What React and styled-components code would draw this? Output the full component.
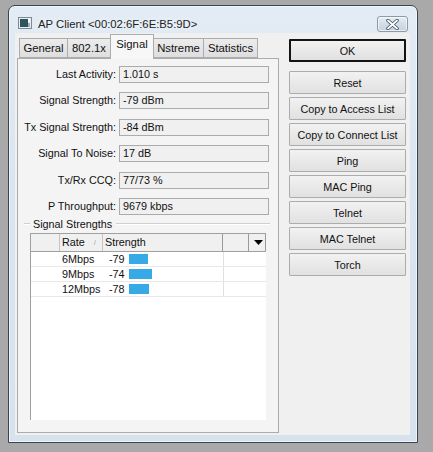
import React from 'react';
import styled, { createGlobalStyle } from 'styled-components';

const Global = createGlobalStyle`
  html, body { margin: 0; padding: 0; background: #a9a9a9; }
  body { font-family: "Liberation Sans", Arial, sans-serif; }
  * { box-sizing: border-box; }
`;

const Window = styled.div`
  margin: 5px 0 0 8px;
  width: 410px;
  height: 438px;
  border: 1px solid #3b444e;
  border-radius: 7px 7px 0 0;
  background: linear-gradient(180deg, #e3ecf5 0%, #d9e5f1 40%, #d6e2ee 100%);
  box-shadow: inset 0 0 0 1px rgba(255, 255, 255, 0.55);
  display: flex;
  flex-direction: column;
`;

const TitleBar = styled.div`
  height: 27px;
  display: flex;
  align-items: flex-start;
  padding: 10px 9px 0 9px;
`;

const TitleIcon = styled.svg`
  width: 14px;
  height: 12px;
  margin-top: 1px;
  flex: none;
`;

const TitleText = styled.div`
  margin-left: 6px;
  font-size: 11.3px;
  line-height: 16px;
  color: #222;
  text-shadow: 0 0 6px rgba(255, 255, 255, 0.9);
  white-space: nowrap;
`;

const CloseButton = styled.div`
  margin-left: auto;
  width: 31px;
  height: 16px;
  border: 1px solid #8c99a8;
  border-radius: 3px;
  background: linear-gradient(180deg, #e7eef5 0%, #d2dde8 50%, #c6d3e0 100%);
  box-shadow: inset 0 0 0 1px rgba(255, 255, 255, 0.6);
  display: flex;
  align-items: center;
  justify-content: center;
`;

const Client = styled.div`
  flex: 1;
  margin: 0 7px 7px 6px;
  background: #f0f0f0;
  display: flex;
  gap: 10px;
  padding: 0 4px 2px 2px;
`;

const LeftColumn = styled.div`
  width: 262px;
  display: flex;
  flex-direction: column;
`;

const Tabs = styled.div`
  height: 25px;
  display: flex;
  align-items: flex-end;
  padding-left: 2px;
  position: relative;
  z-index: 1;
`;

const Tab = styled.div`
  width: ${(p) => p.$w}px;
  height: ${(p) => (p.$active ? 25 : 20)}px;
  margin-bottom: ${(p) => (p.$active ? -1 : 0)}px;
  border: 1px solid #acacac;
  border-bottom: ${(p) => (p.$active ? 'none' : '1px solid #acacac')};
  margin-left: ${(p) => (p.$first ? 0 : -1)}px;
  background: ${(p) => (p.$active ? '#f7f7f7' : 'linear-gradient(180deg, #ececec, #dedede)')};
  font-size: 11.3px;
  color: #111;
  display: flex;
  align-items: ${(p) => (p.$active ? 'flex-start' : 'center')};
  padding-top: ${(p) => (p.$active ? 3 : 0)}px;
  justify-content: center;
  white-space: nowrap;
`;

const Panel = styled.div`
  flex: 1;
  border: 1px solid #acacac;
  background: #f4f4f4;
  display: flex;
  flex-direction: column;
`;

const FieldGrid = styled.div`
  display: grid;
  grid-template-columns: 98px 150px;
  grid-auto-rows: 17px;
  column-gap: 3px;
  row-gap: 9.4px;
  padding-top: 7px;
`;

const Label = styled.div`
  font-size: 10.8px;
  color: #111;
  text-align: right;
  line-height: 17px;
  white-space: nowrap;
`;

const Field = styled.div`
  border: 1px solid #ababab;
  background: #f0f0f0;
  font-size: 10.8px;
  line-height: 15px;
  padding-left: 3px;
  color: #111;
  white-space: nowrap;
`;

const GroupHeader = styled.div`
  margin: 2px 8px 0 6px;
  height: 14px;
  display: flex;
  align-items: center;
`;

const GroupLine = styled.div`
  height: 2px;
  border-top: 1px solid #d0d0d0;
  border-bottom: 1px solid #ffffff;
  width: ${(p) => (p.$w ? `${p.$w}px` : 'auto')};
  flex: ${(p) => (p.$w ? 'none' : '1')};
`;

const GroupTitle = styled.div`
  font-size: 10.8px;
  color: #111;
  padding: 0 4px 0 3px;
  white-space: nowrap;
`;

const Table = styled.div`
  margin: 2px 12px 0 12px;
  height: 187px;
  background: #ffffff;
  border-left: 1px solid #a0a0a0;
  display: flex;
  flex-direction: column;
`;

const cols = '29px 43px 120px 26px 17px';

const HeaderRow = styled.div`
  display: grid;
  grid-template-columns: ${cols};
  height: 19px;
  border-top: 1px solid #a0a0a0;
  border-bottom: 1px solid #a0a0a0;
  background: #f0f0f0;
`;

const HeaderCell = styled.div`
  border-right: 1px solid ${(p) => (p.$strong ? '#9a9a9a' : '#c4c4c4')};
  font-size: 10.8px;
  line-height: 17px;
  padding-left: 2px;
  color: #111;
  display: flex;
  align-items: center;
  justify-content: ${(p) => (p.$center ? 'center' : 'flex-start')};
  white-space: nowrap;
`;

const SortMark = styled.span`
  margin-left: 9px;
  font-size: 8px;
  color: #a8a8a8;
`;

const DataRow = styled.div`
  display: grid;
  grid-template-columns: 29px 43px 120px 43px;
  height: 15px;
  border-bottom: 1px solid #e8e8e8;
`;

const Cell = styled.div`
  font-size: 10.8px;
  line-height: 14px;
  color: #111;
  padding-left: ${(p) => p.$pad || 0}px;
  border-left: ${(p) => (p.$sep ? '1px solid #e0e0e0' : 'none')};
  display: flex;
  align-items: center;
  white-space: nowrap;
`;

const Value = styled.span`
  width: 20px;
  flex: none;
`;

const Bar = styled.div`
  height: 10px;
  background: #35aae6;
  flex: none;
`;

const RightColumn = styled.div`
  width: 117px;
  display: flex;
  flex-direction: column;
  gap: 3px;
  padding-top: 6px;
`;

const Button = styled.div`
  height: 23px;
  border: ${(p) => (p.$primary ? '2px solid #141414' : '1px solid #acacac')};
  margin-bottom: ${(p) => (p.$primary ? 6 : 0)}px;
  background: linear-gradient(180deg, #f2f2f2 0%, #e9e9e9 50%, #e1e1e1 100%);
  border-radius: 1px;
  font-size: 10.8px;
  color: #111;
  display: flex;
  align-items: center;
  justify-content: center;
  white-space: nowrap;
`;

const tabs = [
  { label: 'General', w: 49 },
  { label: '802.1x', w: 44 },
  { label: 'Signal', w: 44, active: true },
  { label: 'Nstreme', w: 51 },
  { label: 'Statistics', w: 55 },
];

const fields = [
  ['Last Activity:', '1.010 s'],
  ['Signal Strength:', '-79 dBm'],
  ['Tx Signal Strength:', '-84 dBm'],
  ['Signal To Noise:', '17 dB'],
  ['Tx/Rx CCQ:', '77/73 %'],
  ['P Throughput:', '9679 kbps'],
];

const rows = [
  { rate: '6Mbps', val: '-79', bar: 19 },
  { rate: '9Mbps', val: '-74', bar: 23 },
  { rate: '12Mbps', val: '-78', bar: 20 },
];

const buttons = [
  'Reset',
  'Copy to Access List',
  'Copy to Connect List',
  'Ping',
  'MAC Ping',
  'Telnet',
  'MAC Telnet',
  'Torch',
];

export default function App() {
  return (
    <>
      <Global />
      <Window>
        <TitleBar>
          <TitleIcon viewBox="0 0 14 12">
            <rect x="0.5" y="0.5" width="13" height="11" fill="#e8eef2" stroke="#7d8a93" />
            <rect x="2" y="2" width="8" height="8" fill="#2f5560" />
            <rect x="10" y="2" width="2" height="3" fill="#ffffff" />
            <rect x="10" y="6" width="2" height="4" fill="#9fb0b8" />
          </TitleIcon>
          <TitleText>AP Client &lt;00:02:6F:6E:B5:9D&gt;</TitleText>
          <CloseButton>
            <svg width="13" height="11" viewBox="0 0 13 11">
              <path d="M2 1.5 L11 9.5 M11 1.5 L2 9.5" stroke="#3d4a58" strokeWidth="3.4" strokeLinecap="round" />
              <path d="M2 1.5 L11 9.5 M11 1.5 L2 9.5" stroke="#ffffff" strokeWidth="1.8" strokeLinecap="round" />
            </svg>
          </CloseButton>
        </TitleBar>
        <Client>
          <LeftColumn>
            <Tabs>
              {tabs.map((t, i) => (
                <Tab key={t.label} $w={t.w} $active={t.active} $first={i === 0}>
                  {t.label}
                </Tab>
              ))}
            </Tabs>
            <Panel>
              <FieldGrid>
                {fields.map(([l, v]) => (
                  <React.Fragment key={l}>
                    <Label>{l}</Label>
                    <Field>{v}</Field>
                  </React.Fragment>
                ))}
              </FieldGrid>
              <GroupHeader>
                <GroupLine $w={6} />
                <GroupTitle>Signal Strengths</GroupTitle>
                <GroupLine />
              </GroupHeader>
              <Table>
                <HeaderRow>
                  <HeaderCell />
                  <HeaderCell>
                    Rate<SortMark>/</SortMark>
                  </HeaderCell>
                  <HeaderCell $strong>Strength</HeaderCell>
                  <HeaderCell $strong />
                  <HeaderCell $strong $center>
                    <svg width="9" height="5" viewBox="0 0 9 5">
                      <path d="M0 0 L9 0 L4.5 5 Z" fill="#000" />
                    </svg>
                  </HeaderCell>
                </HeaderRow>
                {rows.map((r) => (
                  <DataRow key={r.rate}>
                    <Cell />
                    <Cell $pad={2}>{r.rate}</Cell>
                    <Cell $pad={6}>
                      <Value>{r.val}</Value>
                      <Bar style={{ width: r.bar }} />
                    </Cell>
                    <Cell $sep />
                  </DataRow>
                ))}
              </Table>
            </Panel>
          </LeftColumn>
          <RightColumn>
            <Button $primary>OK</Button>
            {buttons.map((b) => (
              <Button key={b}>{b}</Button>
            ))}
          </RightColumn>
        </Client>
      </Window>
    </>
  );
}
